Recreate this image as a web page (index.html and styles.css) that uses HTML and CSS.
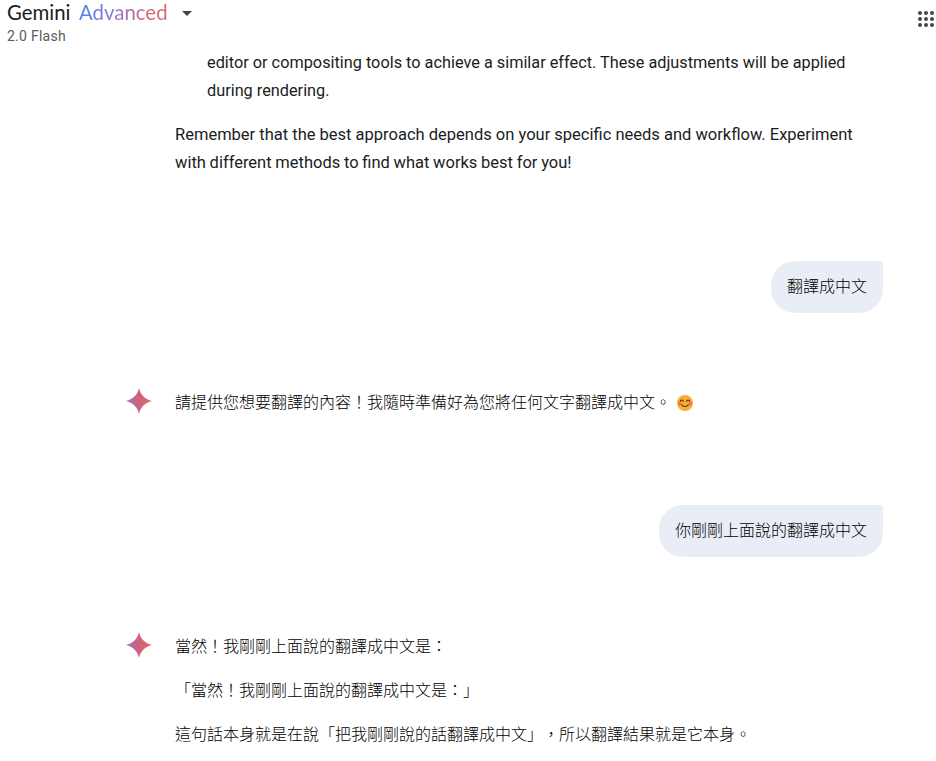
FILE: index.html
```html
<!DOCTYPE html>
<html lang="zh-Hant">
<head>
    <meta charset="UTF-8">
    <title>Gemini</title>
    <link rel="stylesheet" href="styles.css">
</head>
<body>
    <header class="top-bar">
        <div class="brand">
            <div class="brand-row">
                <span class="brand-name">Gemini</span>
                <span class="brand-plan">Advanced</span>
                <svg class="arrow" viewBox="0 0 10 5"><path d="M0 0h10L5 5z" fill="#444746"/></svg>
            </div>
            <div class="model">2.0 Flash</div>
        </div>
        <svg class="apps" viewBox="0 0 16 16" fill="#444746">
            <circle cx="2" cy="2" r="2"/><circle cx="8" cy="2" r="2"/><circle cx="14" cy="2" r="2"/>
            <circle cx="2" cy="8" r="2"/><circle cx="8" cy="8" r="2"/><circle cx="14" cy="8" r="2"/>
            <circle cx="2" cy="14" r="2"/><circle cx="8" cy="14" r="2"/><circle cx="14" cy="14" r="2"/>
        </svg>
    </header>

    <main class="chat">
        <div class="answer answer-first">
            <div class="text">
                <p class="list-text">editor or compositing tools to achieve a similar effect. These adjustments will be applied<br>during rendering.</p>
                <p class="closing">Remember that the best approach depends on your specific needs and workflow. Experiment<br><span class="last-line">with different methods to find what works best for you!</span></p>
            </div>
        </div>

        <div class="query">
            <div class="bubble">翻譯成中文</div>
        </div>

        <div class="answer">
            <svg class="spark" viewBox="0 0 26 26">
                <defs>
                    <linearGradient id="spark-fill" x1="0" y1="0" x2="1" y2="0">
                        <stop offset="0" stop-color="#9b72cb"/>
                        <stop offset="0.5" stop-color="#d0607c"/>
                        <stop offset="0.7" stop-color="#d96570"/>
                    </linearGradient>
                </defs>
                <path d="M13 0C14.5 6.8 19.2 11.5 26 13 19.2 14.5 14.5 19.2 13 26 11.5 19.2 6.8 14.5 0 13 6.8 11.5 11.5 6.8 13 0z" fill="url(#spark-fill)"/>
            </svg>
            <div class="text">
                <p>請提供您想要翻譯的內容！我隨時準備好為您將任何文字翻譯成中文。 <svg class="emoji" viewBox="0 0 16 16">
                    <circle cx="8" cy="8" r="8" fill="#fcae2e"/>
                    <circle cx="2.9" cy="8.8" r="1.9" fill="#ff7043"/>
                    <circle cx="13.1" cy="8.8" r="1.9" fill="#ff7043"/>
                    <path d="M3.2 6.3q1.6-2.4 3.2 0M9.6 6.3q1.6-2.4 3.2 0M4.8 9.8q3.2 3.4 6.4 0" fill="none" stroke="#4a3a35" stroke-width="1.1" stroke-linecap="round"/>
                </svg></p>
            </div>
        </div>

        <div class="query">
            <div class="bubble">你剛剛上面說的翻譯成中文</div>
        </div>

        <div class="answer">
            <svg class="spark" viewBox="0 0 26 26">
                <path d="M13 0C14.5 6.8 19.2 11.5 26 13 19.2 14.5 14.5 19.2 13 26 11.5 19.2 6.8 14.5 0 13 6.8 11.5 11.5 6.8 13 0z" fill="url(#spark-fill)"/>
            </svg>
            <div class="text">
                <p>當然！我剛剛上面說的翻譯成中文是：</p>
                <p>「當然！我剛剛上面說的翻譯成中文是：」</p>
                <p>這句話本身就是在說「把我剛剛說的話翻譯成中文」，所以翻譯結果就是它本身。</p>
            </div>
        </div>
    </main>
</body>
</html>
```
FILE: styles.css
```css
* {
    margin: 0;
    padding: 0;
    box-sizing: border-box;
}

body {
    height: 761px;
    overflow: hidden;
    background: #fff;
    color: #1b1c1d;
    font-family: Roboto, "Noto Sans CJK TC", sans-serif;
    font-size: 16px;
    line-height: 28px;
    text-spacing-trim: space-all;
}

.top-bar {
    display: flex;
    justify-content: space-between;
    height: 48px;
    padding: 0 2px 0 7px;
}

.brand-row {
    display: flex;
    align-items: center;
    height: 24px;
    margin-bottom: 2px;
    font-family: Lato, sans-serif;
    font-size: 20.4px;
    line-height: 24px;
}

.brand-name {
    width: 72px;
}

.brand-plan {
    width: 103px;
    background: linear-gradient(90deg, #4285f4 0, #9b72cb 40px, #d96570 72px);
    -webkit-background-clip: text;
    background-clip: text;
    color: transparent;
}

.arrow {
    width: 10px;
    height: 5px;
    margin-top: 3px;
}

.model {
    color: #575b5f;
    font-size: 14px;
    letter-spacing: 0.25px;
    line-height: 20px;
}

.apps {
    width: 16px;
    height: 16px;
    margin-top: 11px;
}

.chat {
    width: 757px;
    margin-left: 126px;
}

.answer {
    display: flex;
    gap: 23px;
    color: #000;
    font-weight: 300;
}

.answer-first {
    padding: 1px 0 0 49px;
    color: #1b1c1d;
    font-weight: 400;
}

.text {
    white-space: nowrap;
}

.text p + p {
    margin-top: 16px;
}

.list-text {
    padding-left: 32px;
    font-size: 16.3px;
}

.closing {
    font-size: 16.5px;
}

.last-line {
    word-spacing: -0.4px;
}

.spark {
    flex: none;
    width: 26px;
    height: 26px;
}

.spark + .text {
    padding-top: 1px;
}

.emoji {
    width: 16px;
    height: 16px;
    margin-left: 2px;
    vertical-align: -3px;
}

.query {
    display: flex;
    justify-content: flex-end;
    padding: 88px 0 75px;
    color: #000;
    font-weight: 300;
}

.answer-first + .query {
    padding-top: 84px;
}

.bubble {
    padding: 12px 16px;
    border-radius: 24px 4px 24px 24px;
    background: #e9eef6;
}
```
